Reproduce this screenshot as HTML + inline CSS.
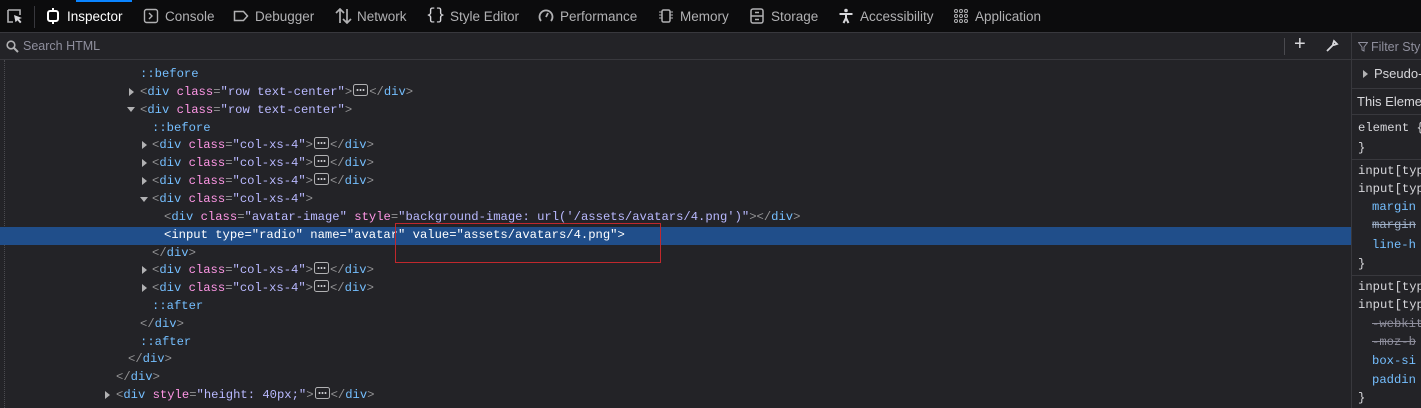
<!DOCTYPE html>
<html><head><style>
*{margin:0;padding:0;box-sizing:border-box}
body{width:1421px;height:408px;overflow:hidden;background:#232327;font-family:"Liberation Sans",sans-serif;position:relative;color:#d7d7db}
.tb{position:absolute;left:0;top:0;width:1421px;height:33px;background:#0c0c0d;border-bottom:1px solid #38383d}
.tab{position:absolute;top:9px;font-size:13.5px;color:#b1b1b3;white-space:nowrap}
.tab svg{position:absolute;left:-22px;top:-1px}
.sb{position:absolute;left:0;top:33px;width:1351px;height:27px;border-bottom:1px solid #38383d;background:#232327}
.mono{font-family:"Liberation Mono",monospace;font-size:12.2px;white-space:pre}
.ln{position:absolute;height:18px;line-height:18px}
.t{color:#75bfff}.b{color:#939395}.a{color:#ff97e6}.v{color:#b9b9ff}.p{color:#75bfff}
.arr{position:absolute;width:0;height:0}
.ar{border-left:5px solid #b1b1b3;border-top:4px solid transparent;border-bottom:4px solid transparent}
.ad{border-top:5px solid #b1b1b3;border-left:4px solid transparent;border-right:4px solid transparent}
.d{display:inline-block;width:17px;height:12px;vertical-align:-1px}
.rp{position:absolute;left:1351px;top:33px;width:70px;height:375px;border-left:1px solid #38383d;background:#232327;overflow:hidden}
.rl{position:absolute;left:6px;white-space:pre}
.hr{position:absolute;left:0;width:70px;height:1px;background:#38383d}
</style></head><body>
<svg width="0" height="0" style="position:absolute"><symbol id="dd" viewBox="0 0 17 12"><rect x="1.5" y="0.5" width="14" height="11" rx="2" stroke="#b1b1b3" fill="none"/><circle cx="5.5" cy="6" r="1" fill="#d7d7db"/><circle cx="8.5" cy="6" r="1" fill="#d7d7db"/><circle cx="11.5" cy="6" r="1" fill="#d7d7db"/></symbol></svg>
<div class="tb">
<div style="position:absolute;left:76px;top:0;width:56px;height:2px;background:#0a84ff"></div>
<div style="position:absolute;left:34px;top:6px;width:1px;height:22px;background:#38383d"></div>
<svg style="position:absolute;left:6px;top:8px" width="18" height="17" viewBox="0 0 18 17"><path d="M2 2h12v5M2 2v12h5" stroke="#b1b1b3" fill="none" stroke-width="1.6"/><path d="M8 7l8 3-3 1 2.5 3-1.5 1.2-2.5-3-2 2z" fill="#d7d7db"/></svg>
<div class="tab" style="left:67px;color:#fff">Inspector<svg width="16" height="16" viewBox="0 0 16 16"><rect x="3" y="3" width="10" height="10" rx="2" stroke="#fff" stroke-width="2" fill="none"/><path d="M8 0v3M8 13v3" stroke="#fff" stroke-width="2"/></svg></div>
<div class="tab" style="left:165px">Console<svg width="16" height="16" viewBox="0 0 16 16"><rect x="1.5" y="1.5" width="13" height="13" rx="2" stroke="#b1b1b3" stroke-width="1.4" fill="none"/><path d="M6 5l3 3-3 3" stroke="#b1b1b3" stroke-width="1.4" fill="none"/></svg></div>
<div class="tab" style="left:255px">Debugger<svg width="16" height="16" viewBox="0 0 16 16"><path d="M1.5 3.5h9l4 4.5-4 4.5h-9z" stroke="#b1b1b3" stroke-width="1.5" fill="none"/></svg></div>
<div class="tab" style="left:357px">Network<svg width="18" height="16" viewBox="0 0 18 16"><path d="M5 15V1M1 5l4-4 4 4M12 1v14M8 11l4 4 4-4" stroke="#b1b1b3" stroke-width="1.7" fill="none"/></svg></div>
<div class="tab" style="left:450px">Style Editor<span style="position:absolute;left:-24px;top:-3px;font-size:16px;font-family:'Liberation Mono';color:#d7d7db">{}</span></div>
<div class="tab" style="left:560px">Performance<svg width="16" height="16" viewBox="0 0 16 16"><path d="M3 13A6.5 6.5 0 1 1 13 13" stroke="#b1b1b3" stroke-width="1.8" fill="none"/><path d="M8 9l2-4" stroke="#b1b1b3" stroke-width="1.8"/></svg></div>
<div class="tab" style="left:680px">Memory<svg width="16" height="16" viewBox="0 0 16 16"><rect x="4" y="2" width="8" height="12" rx="1.5" stroke="#b1b1b3" stroke-width="1.5" fill="none"/><path d="M1 4h3M1 7h3M1 10h3M12 4h3M12 7h3M12 10h3" stroke="#b1b1b3"/></svg></div>
<div class="tab" style="left:771px">Storage<svg width="16" height="16" viewBox="0 0 16 16"><rect x="2" y="1" width="12" height="14" rx="2" stroke="#b1b1b3" stroke-width="1.5" fill="none"/><path d="M2 8h12M6 4.5h4M6 11.5h4" stroke="#b1b1b3" stroke-width="1.5"/></svg></div>
<div class="tab" style="left:860px">Accessibility<svg width="16" height="16" viewBox="0 0 16 16"><circle cx="8" cy="2.5" r="1.8" fill="#d7d7db"/><path d="M1.5 6h13M8 6v4M5.5 15l2.5-5 2.5 5" stroke="#d7d7db" stroke-width="2" fill="none"/></svg></div>
<div class="tab" style="left:975px">Application<svg width="16" height="16" viewBox="0 0 16 16" fill="none" stroke="#b1b1b3" stroke-width="1"><circle cx="3" cy="3" r="1.5"/><circle cx="8" cy="3" r="1.5"/><circle cx="13" cy="3" r="1.5"/><circle cx="3" cy="8" r="1.5"/><circle cx="8" cy="8" r="1.5"/><circle cx="13" cy="8" r="1.5"/><circle cx="3" cy="13" r="1.5"/><circle cx="8" cy="13" r="1.5"/><circle cx="13" cy="13" r="1.5"/></svg></div>
</div>
<div class="sb">
<svg style="position:absolute;left:6px;top:7px" width="13" height="13" viewBox="0 0 13 13"><circle cx="5" cy="5" r="3.8" stroke="#b1b1b3" stroke-width="1.6" fill="none"/><path d="M8 8l4 4" stroke="#b1b1b3" stroke-width="2"/></svg>
<div style="position:absolute;left:23px;top:6px;font-size:12.5px;color:#8f8f9d">Search HTML</div>
<div style="position:absolute;left:1284px;top:5px;width:1px;height:17px;background:#4a4a4f"></div>
<div style="position:absolute;left:1294px;top:0px;font-size:20px;color:#d7d7db">+</div>
<svg style="position:absolute;left:1325px;top:6px" width="14" height="14" viewBox="0 0 14 14"><path d="M2 12l7-7M9 2l3 3-3 1-1-1z" stroke="#d7d7db" stroke-width="1.8" fill="none"/></svg>
</div>
<div style="position:absolute;left:4px;top:60px;height:348px;border-left:1px dotted #4a4a4f"></div>
<div style="position:absolute;left:0;top:227px;width:1351px;height:18px;background:#204e8a"></div>
<div class="mono">
<div class="ln p" style="left:140px;top:65px">::before</div>
<div class="arr ar" style="left:129px;top:88px"></div>
<div class="ln" style="left:140px;top:83px"><span class="b">&lt;</span><span class="t">div</span> <span class="a">class</span><span class="b">=</span><span class="v">"row text-center"</span><span class="b">&gt;</span><svg class="d"><use href="#dd"/></svg><span class="b">&lt;/</span><span class="t">div</span><span class="b">&gt;</span></div>
<div class="arr ad" style="left:127px;top:107px"></div>
<div class="ln" style="left:140px;top:101px"><span class="b">&lt;</span><span class="t">div</span> <span class="a">class</span><span class="b">=</span><span class="v">"row text-center"</span><span class="b">&gt;</span></div>
<div class="ln p" style="left:152px;top:119px">::before</div>
<div class="arr ar" style="left:142px;top:141px"></div>
<div class="ln" style="left:152px;top:136px"><span class="b">&lt;</span><span class="t">div</span> <span class="a">class</span><span class="b">=</span><span class="v">"col-xs-4"</span><span class="b">&gt;</span><svg class="d"><use href="#dd"/></svg><span class="b">&lt;/</span><span class="t">div</span><span class="b">&gt;</span></div>
<div class="arr ar" style="left:142px;top:159px"></div>
<div class="ln" style="left:152px;top:154px"><span class="b">&lt;</span><span class="t">div</span> <span class="a">class</span><span class="b">=</span><span class="v">"col-xs-4"</span><span class="b">&gt;</span><svg class="d"><use href="#dd"/></svg><span class="b">&lt;/</span><span class="t">div</span><span class="b">&gt;</span></div>
<div class="arr ar" style="left:142px;top:177px"></div>
<div class="ln" style="left:152px;top:172px"><span class="b">&lt;</span><span class="t">div</span> <span class="a">class</span><span class="b">=</span><span class="v">"col-xs-4"</span><span class="b">&gt;</span><svg class="d"><use href="#dd"/></svg><span class="b">&lt;/</span><span class="t">div</span><span class="b">&gt;</span></div>
<div class="arr ad" style="left:140px;top:197px"></div>
<div class="ln" style="left:152px;top:190px"><span class="b">&lt;</span><span class="t">div</span> <span class="a">class</span><span class="b">=</span><span class="v">"col-xs-4"</span><span class="b">&gt;</span></div>
<div class="ln" style="left:164px;top:208px"><span class="b">&lt;</span><span class="t">div</span> <span class="a">class</span><span class="b">=</span><span class="v">"avatar-image"</span> <span class="a">style</span><span class="b">=</span><span class="v">"background-image: url('/assets/avatars/4.png')"</span><span class="b">&gt;&lt;/</span><span class="t">div</span><span class="b">&gt;</span></div>
<div class="ln" style="left:164px;top:226px;color:#fff">&lt;input type="radio" name="avatar" value="assets/avatars/4.png"&gt;</div>
<div class="ln" style="left:152px;top:244px"><span class="b">&lt;/</span><span class="t">div</span><span class="b">&gt;</span></div>
<div class="arr ar" style="left:142px;top:266px"></div>
<div class="ln" style="left:152px;top:261px"><span class="b">&lt;</span><span class="t">div</span> <span class="a">class</span><span class="b">=</span><span class="v">"col-xs-4"</span><span class="b">&gt;</span><svg class="d"><use href="#dd"/></svg><span class="b">&lt;/</span><span class="t">div</span><span class="b">&gt;</span></div>
<div class="arr ar" style="left:142px;top:284px"></div>
<div class="ln" style="left:152px;top:279px"><span class="b">&lt;</span><span class="t">div</span> <span class="a">class</span><span class="b">=</span><span class="v">"col-xs-4"</span><span class="b">&gt;</span><svg class="d"><use href="#dd"/></svg><span class="b">&lt;/</span><span class="t">div</span><span class="b">&gt;</span></div>
<div class="ln p" style="left:152px;top:297px">::after</div>
<div class="ln" style="left:140px;top:315px"><span class="b">&lt;/</span><span class="t">div</span><span class="b">&gt;</span></div>
<div class="ln p" style="left:140px;top:333px">::after</div>
<div class="ln" style="left:128px;top:350px"><span class="b">&lt;/</span><span class="t">div</span><span class="b">&gt;</span></div>
<div class="ln" style="left:116px;top:368px"><span class="b">&lt;/</span><span class="t">div</span><span class="b">&gt;</span></div>
<div class="arr ar" style="left:105px;top:391px"></div>
<div class="ln" style="left:116px;top:386px"><span class="b">&lt;</span><span class="t">div</span> <span class="a">style</span><span class="b">=</span><span class="v">"height: 40px;"</span><span class="b">&gt;</span><svg class="d"><use href="#dd"/></svg><span class="b">&lt;/</span><span class="t">div</span><span class="b">&gt;</span></div>
</div>
<div style="position:absolute;left:395px;top:223px;width:266px;height:40px;border:1.5px solid #c0282d"></div>
<div class="rp">
<div style="position:absolute;left:0;top:0;width:70px;height:27px;border-bottom:1px solid #38383d"></div>
<svg style="position:absolute;left:6px;top:9px" width="10" height="10" viewBox="0 0 10 10"><path d="M0.5 0.5h9L6 5v4L4 8V5z" stroke="#8f8f9d" fill="none"/></svg>
<div class="rl" style="left:19px;top:7px;font-size:12.5px;color:#8f8f9d">Filter Styles</div>
<div class="arr ar" style="left:11px;top:37px"></div>
<div class="rl" style="left:22px;top:33px;font-size:13px">Pseudo-elements</div>
<div class="hr" style="top:55px"></div>
<div class="rl" style="left:5px;top:61px;font-size:13px">This Element</div>
<div class="hr" style="top:81px"></div>
<div class="mono">
<div class="rl" style="top:88px">element {</div>
<div class="rl" style="top:108px">}</div>
<div class="hr" style="top:126px"></div>
<div class="rl" style="top:131px">input[type</div>
<div class="rl" style="top:149px">input[type</div>
<div class="rl t" style="left:20px;top:167px">margin</div>
<div class="rl t" style="left:20px;top:185px;text-decoration:line-through;color:#9fb0c8">margin</div>
<div class="rl t" style="left:20px;top:205px">line-h</div>
<div class="rl" style="top:224px">}</div>
<div class="hr" style="top:242px"></div>
<div class="rl" style="top:247px">input[type</div>
<div class="rl" style="top:265px">input[type</div>
<div class="rl" style="left:20px;top:284px;text-decoration:line-through;color:#8f8f9d">-webkit</div>
<div class="rl" style="left:20px;top:302px;text-decoration:line-through;color:#8f8f9d">-moz-b</div>
<div class="rl t" style="left:20px;top:321px">box-si</div>
<div class="rl t" style="left:20px;top:340px">paddin</div>
<div class="rl" style="top:358px">}</div>
</div>
</div>
</body></html>
